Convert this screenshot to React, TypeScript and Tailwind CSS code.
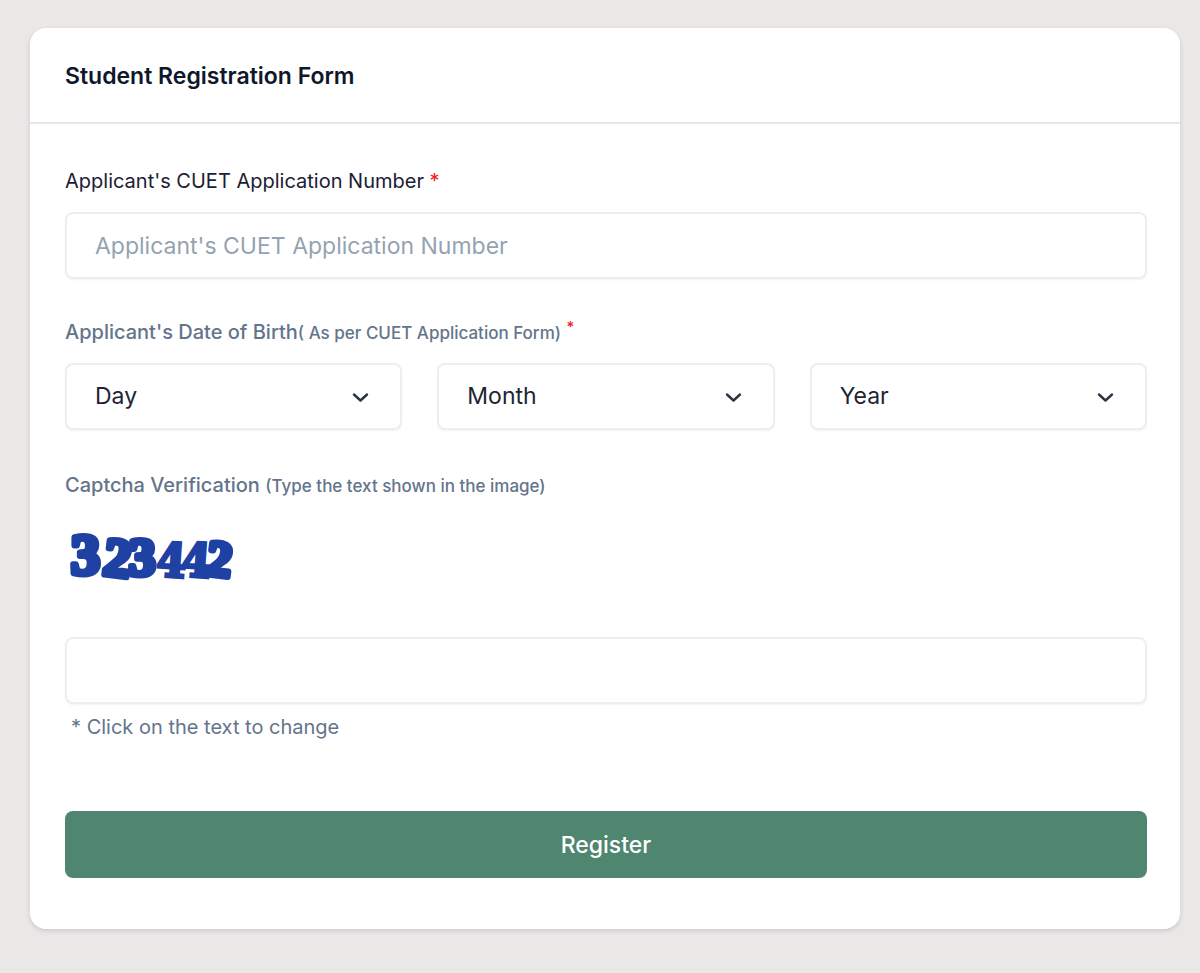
import { useState } from 'react';
import type { ReactNode } from 'react';

const field =
  'block h-[67px] w-full rounded-lg border-2 border-[#ebeef2] bg-white px-7 text-[23px] text-[#1e2433] shadow-xs outline-none placeholder:text-[#94a3b1] focus:border-[#4f866f]';

const months = [
  'January', 'February', 'March', 'April', 'May', 'June',
  'July', 'August', 'September', 'October', 'November', 'December',
];
const days = Array.from({ length: 31 }, (_, i) => String(i + 1));
const years = Array.from({ length: 30 }, (_, i) => String(2010 - i));

function Dropdown({ name, options }: { name: string; options: string[] }) {
  return (
    <div className="grid items-center">
      <select aria-label={name} className={`${field} col-start-1 row-start-1 appearance-none`}>
        <option>{name}</option>
        {options.map((o) => (
          <option key={o}>{o}</option>
        ))}
      </select>
      <svg
        className="pointer-events-none col-start-1 row-start-1 mr-8 h-5 w-5 justify-self-end"
        viewBox="0 0 20 20"
        fill="none"
        stroke="#2b3442"
        strokeWidth="2.4"
        strokeLinecap="round"
        strokeLinejoin="round"
        aria-hidden="true"
      >
        <path d="M4 7.500 10.500 13.500l6.500-6" />
      </svg>
    </div>
  );
}

const glyphs = [
  { x: 6, y: 65, size: 58, turn: 0 },
  { x: 39, y: 67, size: 54, turn: 7 },
  { x: 64, y: 66, size: 53, turn: 0 },
  { x: 92, y: 68, size: 47, turn: 4 },
  { x: 117, y: 68, size: 47, turn: 4 },
  { x: 142, y: 67, size: 50, turn: 7 },
];

function Captcha({ code }: { code: string }) {
  return (
    <svg className="block h-[100px] w-[180px]" viewBox="0 0 180 100" role="img" aria-label="Captcha">
      {code.split('').map((c, i) => (
        <text
          key={i}
          x={glyphs[i].x}
          y={glyphs[i].y}
          transform={`rotate(${glyphs[i].turn} ${glyphs[i].x + 14} ${glyphs[i].y - 18})`}
          fontSize={glyphs[i].size}
          fontWeight={700}
          fontFamily={
            c === '4' ? "'DejaVu Serif Condensed', 'DejaVu Serif', serif" : "'Liberation Serif', serif"
          }
          fill="#1f41a3"
          stroke="#1f41a3"
          strokeWidth={c === '4' ? 3 : 6}
          strokeLinejoin={c === '4' ? 'miter' : 'round'}
        >
          {c}
        </text>
      ))}
    </svg>
  );
}

function Hint({ children }: { children: ReactNode }) {
  return <span className="text-[17px]">{children}</span>;
}

export default function App() {
  const [code, setCode] = useState('323442');
  const renew = () => setCode(String(Math.floor(100000 + Math.random() * 900000)));

  return (
    <div className="min-h-screen bg-[#e9e8e6] pt-7 pr-5 pb-11 pl-[30px] font-['Inter',sans-serif]">
      <main className="rounded-2xl bg-white shadow-[0_2px_4px_rgba(60,40,90,0.16)]">
        <header className="border-b-2 border-[#e3e6ec] px-[35px] pt-8 pb-[30px]">
          <h1 className="text-[23px] leading-8 font-semibold text-[#0f172a]">Student Registration Form</h1>
        </header>
        <form className="pt-[42px] pr-[33px] pb-[51px] pl-[35px]" onSubmit={(e) => e.preventDefault()}>
          <label htmlFor="number" className="block text-[20px] leading-[30px] text-[#1b2134]">
            Applicant's CUET Application Number <span className="text-[#ee2024]">*</span>
          </label>
          <input id="number" className={`${field} mt-4`} placeholder="Applicant's CUET Application Number" />

          <fieldset className="mt-[38px]">
            <legend className="block text-[20px] leading-[30px] font-medium text-[#64748b]">
              Applicant's Date of Birth<Hint>( As per CUET Application Form)</Hint>{' '}
              <sup className="text-[15px] text-[#ee2024]">*</sup>
            </legend>
            <div className="mt-[15px] grid grid-cols-3 gap-[35px]">
              <Dropdown name="Day" options={days} />
              <Dropdown name="Month" options={months} />
              <Dropdown name="Year" options={years} />
            </div>
          </fieldset>

          <label htmlFor="captcha" className="mt-10 block text-[20px] leading-[30px] font-medium text-[#64748b]">
            Captcha Verification <Hint>(Type the text shown in the image)</Hint>
          </label>
          <button type="button" onClick={renew} className="mt-2 block cursor-pointer">
            <Captcha code={code} />
          </button>
          <input id="captcha" className={`${field} mt-7`} />
          <p className="mt-2 px-[6px] text-[20px] leading-[30px] text-[#64748b]">* Click on the text to change</p>

          <button
            type="submit"
            className="mt-[69px] h-[67px] w-full cursor-pointer rounded-lg bg-[#4f866f] pt-0.5 text-[23px] font-medium text-white"
          >
            Register
          </button>
        </form>
      </main>
    </div>
  );
}
